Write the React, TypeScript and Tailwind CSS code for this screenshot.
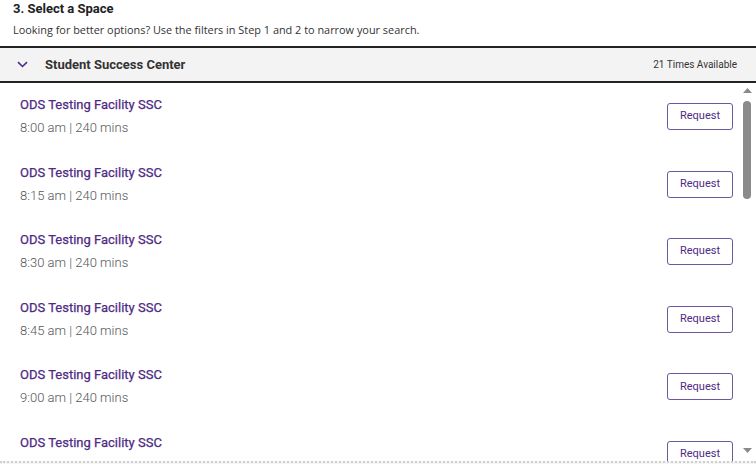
import React from "react";

const rows = [
  "8:00 am",
  "8:15 am",
  "8:30 am",
  "8:45 am",
  "9:00 am",
  "9:15 am",
];

export default function App() {
  return (
    <div
      className="w-[756px] h-[464px] overflow-hidden bg-white flex flex-col"
      style={{ fontFamily: "Roboto, 'Liberation Sans', sans-serif" }}
    >
      <div className="pl-[13px] shrink-0">
        <h2 className="text-[13px] leading-[18px] font-bold text-[#222]">3. Select a Space</h2>
        <p
          className="mt-[4px] text-[10.9px] leading-[16px] text-[#333]"
          style={{ fontFamily: "'Open Sans', 'Noto Sans', sans-serif" }}
        >
          Looking for better options? Use the filters in Step 1 and 2 to narrow your search.
        </p>
      </div>
      <div className="mt-[8px] shrink-0 h-[37px] border-y-2 border-[#222] bg-[#f3f3f3] flex items-center pl-[17px] pr-[19px]">
        <svg width="11" height="7" viewBox="0 0 11 7" className="shrink-0">
          <path d="M1 1.2 L5.5 5.5 L10 1.2" fill="none" stroke="#4e2a84" strokeWidth="1.6" />
        </svg>
        <span className="ml-[17px] text-[13px] font-bold text-[#333]">Student Success Center</span>
        <span className="ml-auto text-[10px] text-[#333]">21 Times Available</span>
      </div>
      <div className="flex h-[378px] shrink-0 overflow-hidden">
        <div className="flex-1 flex flex-col">
          {rows.map((t) => (
            <div key={t} className="h-[67.6px] shrink-0 flex items-start pl-[20px] pr-[7px] pt-[11px]">
              <div className="flex-1">
                <div className="text-[13px] leading-[22px] font-normal text-[#4e2a84] [-webkit-text-stroke:0.25px_#4e2a84]">
                  ODS Testing Facility SSC
                </div>
                <div className="text-[13px] leading-[23px] font-light text-[#555]">{t} | 240 mins</div>
              </div>
              <button className="mt-[9px] w-[66px] h-[27px] border border-[#6c56a0] rounded-[3px] bg-white text-[11px] text-[#4e2a84] flex items-center justify-center">
                Request
              </button>
            </div>
          ))}
        </div>
        <div className="w-[16px] shrink-0 flex flex-col items-center pt-[5px] pr-[2px]">
          <svg width="9" height="5" viewBox="0 0 9 5">
            <path d="M0 5 L4.5 0 L9 5 Z" fill="#8a8a8a" />
          </svg>
          <div className="mt-[8px] w-[8px] h-[98px] rounded-full bg-[#8a8a8a]" />
          <div className="flex-1" />
          <svg width="9" height="5" viewBox="0 0 9 5" className="mb-[8px]">
            <path d="M0 0 L9 0 L4.5 5 Z" fill="#8a8a8a" />
          </svg>
        </div>
      </div>
      <div className="h-[3px] shrink-0 border-t-2 border-dotted border-[#cfcfcf] bg-[#f5f5f5]" />
    </div>
  );
}
